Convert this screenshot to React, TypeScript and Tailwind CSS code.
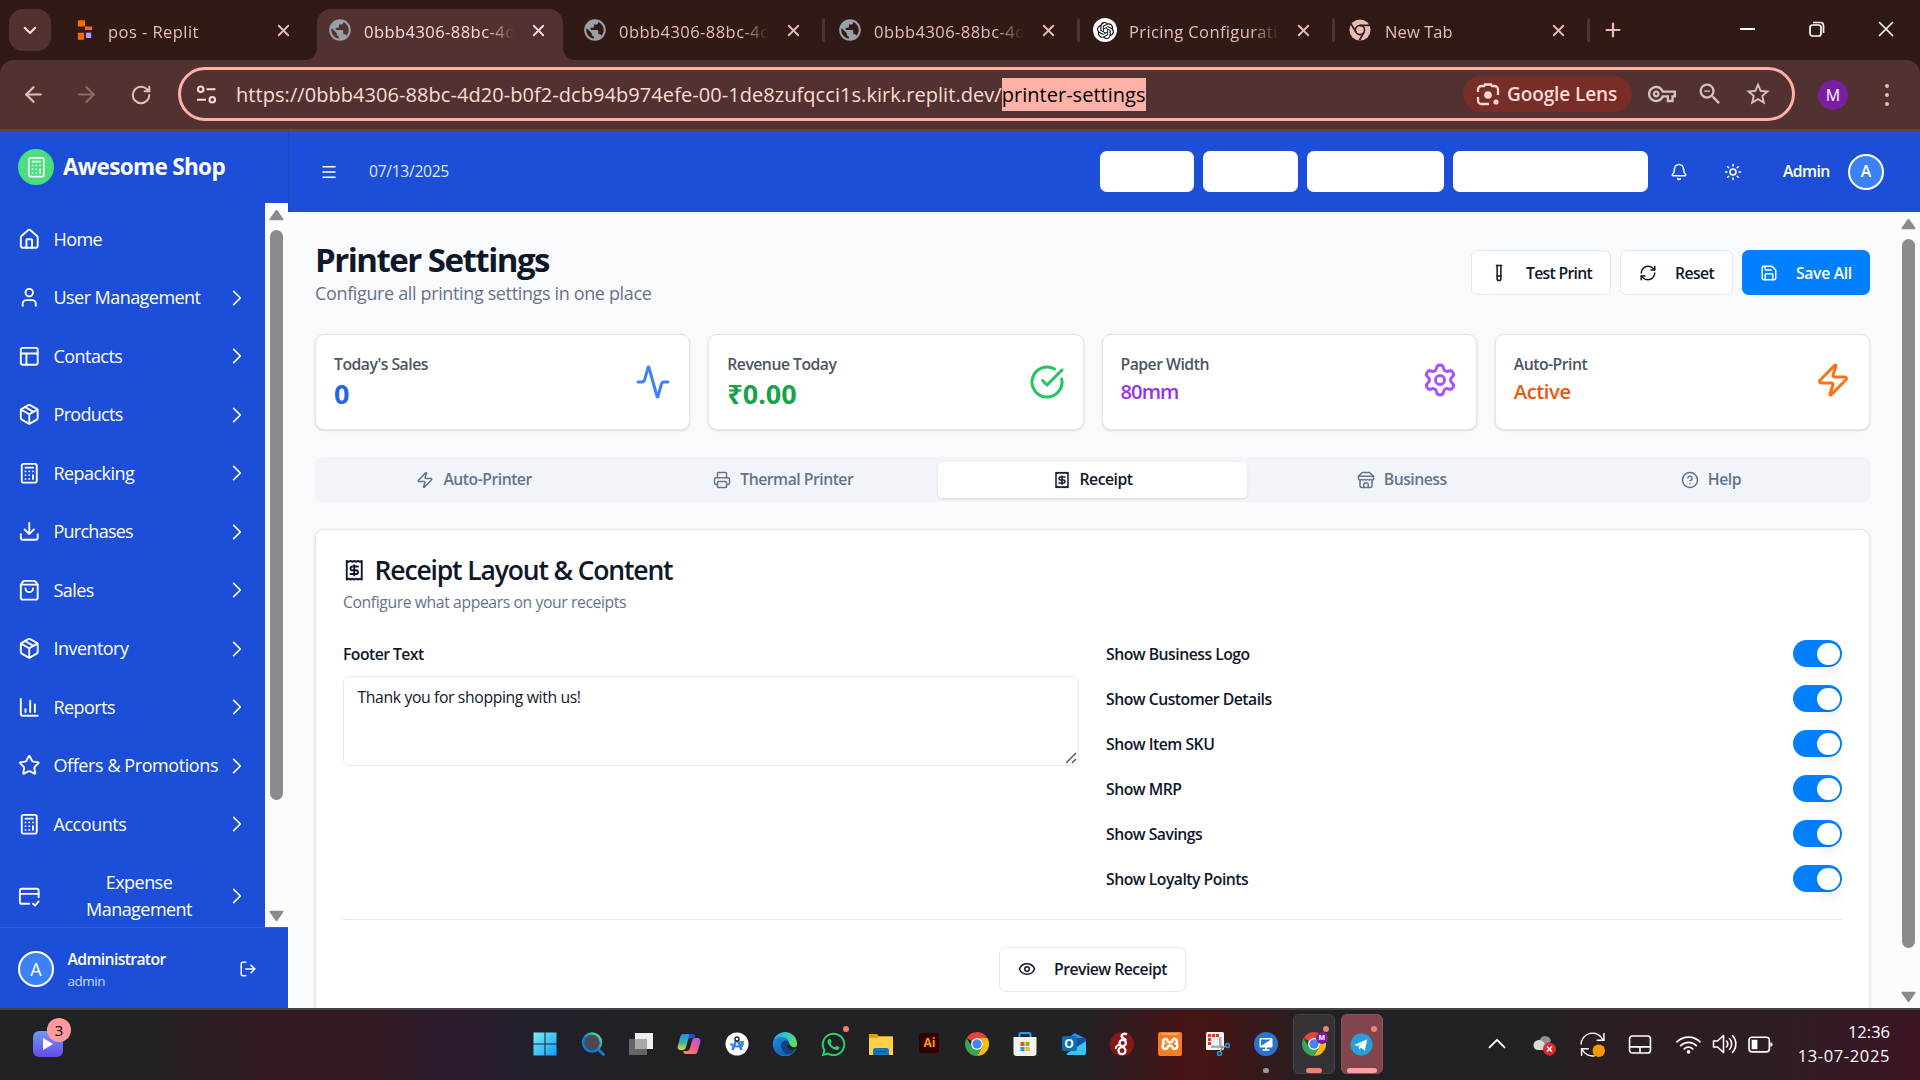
import type { ReactNode } from "react";
import {
  Activity, ArrowLeft, ArrowRight, Bell, Calculator, ChartColumn, CircleCheckBig, CircleHelp, Download, Eye,
  LogOut, Menu, Package, Plus, Printer, RefreshCw, RotateCw, Save, Settings, ShoppingBag, Star, Sun, TestTube, User, X, Zap,
} from "lucide-react";
import { MdOutlineVpnKey, MdPublic, MdStarBorder, MdZoomOut } from "react-icons/md";
import { SiOpenai } from "react-icons/si";
import { FaWhatsapp } from "react-icons/fa";

type IconProps = { className?: string };

function Line({ className = "", children, sw = 2 }: IconProps & { children: ReactNode; sw?: number }) {
  return (
    <svg viewBox="0 0 24 24" className={className} fill="none" stroke="currentColor" strokeWidth={sw} strokeLinecap="round" strokeLinejoin="round">
      {children}
    </svg>
  );
}

const HomeIcon = ({ className }: IconProps) => (
  <Line className={className}>
    <path d="M15 21v-8a1 1 0 0 0-1-1h-4a1 1 0 0 0-1 1v8" />
    <path d="M3 10a2 2 0 0 1 .71-1.53l7-6a2 2 0 0 1 2.58 0l7 6A2 2 0 0 1 21 10v9a2 2 0 0 1-2 2H5a2 2 0 0 1-2-2z" />
  </Line>
);
const UserIcon = ({ className }: IconProps) => <User className={className} />;
const LayoutIcon = ({ className }: IconProps) => (
  <Line className={className}>
    <rect x="3" y="3" width="18" height="18" rx="2" />
    <path d="M3 9h18M9 21V9" />
  </Line>
);
const ReceiptIcon = ({ className }: IconProps) => (
  <Line className={className}>
    <path d="M4 2v20l2-1 2 1 2-1 2 1 2-1 2 1 2-1 2 1V2l-2 1-2-1-2 1-2-1-2 1-2-1-2 1Z" />
    <path d="M16 8h-6a2 2 0 1 0 0 4h4a2 2 0 1 1 0 4H8M12 17.5v-11" />
  </Line>
);
const StoreIcon = ({ className }: IconProps) => (
  <Line className={className}>
    <path d="m2 7 4.41-4.41A2 2 0 0 1 7.83 2h8.34a2 2 0 0 1 1.42.59L22 7" />
    <path d="M4 12v8a2 2 0 0 0 2 2h12a2 2 0 0 0 2-2v-8M15 22v-4a2 2 0 0 0-2-2h-2a2 2 0 0 0-2 2v4M2 7h20" />
    <path d="M22 7v3a2 2 0 0 1-2 2a2.7 2.7 0 0 1-1.59-.63.7.7 0 0 0-.82 0A2.7 2.7 0 0 1 16 12a2.7 2.7 0 0 1-1.59-.63.7.7 0 0 0-.82 0A2.7 2.7 0 0 1 12 12a2.7 2.7 0 0 1-1.59-.63.7.7 0 0 0-.82 0A2.7 2.7 0 0 1 8 12a2.7 2.7 0 0 1-1.59-.63.7.7 0 0 0-.82 0A2.7 2.7 0 0 1 4 12a2 2 0 0 1-2-2V7" />
  </Line>
);
const CardCheckIcon = ({ className }: IconProps) => (
  <Line className={className}>
    <path d="M12 20H4a2 2 0 0 1-2-2V6a2 2 0 0 1 2-2h16a2 2 0 0 1 2 2v7" />
    <path d="M2 9.5h20M16 20l2.2 2L22 17.5" />
  </Line>
);
const ChevronIcon = ({ className }: IconProps) => (
  <Line className={className} sw={2}>
    <path d="m8 4 8 8-8 8" />
  </Line>
);

/* ---------- Browser chrome ---------- */

const ChromeMono = () => (
  <svg viewBox="0 0 24 24" className="size-[22px]">
    <circle cx="12" cy="12" r="11.5" fill="#e7bdb7" />
    <circle cx="12" cy="12" r="5" fill="none" stroke="#311915" strokeWidth="1.8" />
    <path d="M12 7h10.5M7.7 14.5 2.4 5.6M16.3 14.5 11.4 23.2" stroke="#311915" strokeWidth="1.8" />
  </svg>
);

const ReplitIcon = () => (
  <svg viewBox="0 0 18 24" className="h-[22px] w-[16px]">
    <path fill="#ff6a00" d="M1 1h8v7H1zM9 8h8v4H9zM1 15h7v8H1z" />
    <path fill="#ad9dff" d="M10 15h6v6h-6z" />
  </svg>
);

const Globe = () => <MdPublic className="size-[26px] text-[#9aa0a6]" />;

function Tab({ icon, title, active, divider, track }: { icon: ReactNode; title: string; active?: boolean; divider?: boolean; track: string }) {
  return (
    <div className={`relative flex h-[51px] w-[255px] shrink-0 items-start pt-[9px] ${active ? "z-10" : ""}`}>
      {active && (
        <svg viewBox="0 0 270 51" className="absolute top-0 -left-[12px] h-[51px] w-[270px] text-[#513230]">
          <path fill="currentColor" d="M0 51c8 0 12-6 12-14V14C12 6 18 0 26 0h218c8 0 14 6 14 14v23c0 8 4 14 12 14z" />
        </svg>
      )}
      <div className="relative ml-[9px] flex h-[24px] w-[28px] shrink-0 items-center justify-center">{icon}</div>
      <div
        className={`relative ml-[10px] h-[28px] w-[153px] shrink-0 whitespace-nowrap [mask-image:linear-gradient(to_right,black_80%,transparent_98%)] text-[16.5px] leading-[28px] ${track} ${active ? "text-[#ffdad5]" : "text-[#e7bdb7]"}`}
      >
        {title}
      </div>
      <X className={`relative ml-[12px] mt-[3px] size-[19px] shrink-0 ${active ? "text-[#ffdad5]" : "text-[#e7bdb7]"}`} strokeWidth={2.3} />
      {divider && <div className="relative ml-[19px] h-[24px] w-[3px] shrink-0 rounded bg-[#513230]" />}
    </div>
  );
}

function TabStrip() {
  return (
    <div className="flex h-[60px] bg-[#311915] pt-[9px]">
      <div className="ml-[9px] flex h-[42px] w-[42px] items-center justify-center rounded-[14px] bg-[#513230] text-[#ffdad5]">
        <Line className="size-[18px]" sw={2.8}>
          <path d="m5 9 7 7 7-7" />
        </Line>
      </div>
      <div className="ml-[11px] flex">
        <Tab icon={<ReplitIcon />} title="pos - Replit" track="tracking-[0.45px] -indent-px" />
        <Tab icon={<Globe />} title="0bbb4306-88bc-4d" active track="tracking-[0.45px]" />
        <Tab icon={<Globe />} title="0bbb4306-88bc-4d" divider track="tracking-[0.45px]" />
        <Tab icon={<Globe />} title="0bbb4306-88bc-4d" divider track="tracking-[0.45px]" />
        <Tab
          icon={
            <span className="flex size-[24px] items-center justify-center rounded-full bg-white">
              <SiOpenai className="size-[17px] text-black" />
            </span>
          }
          title="Pricing Configurati"
          divider
          track="tracking-[0.38px]"
        />
        <Tab icon={<ChromeMono />} title="New Tab" divider track="tracking-[0.1px] indent-px" />
      </div>
      <Plus className="ml-[10px] mt-[10px] size-[22px] text-[#e7bdb7]" strokeWidth={2.4} />
      <div className="mt-[12px] mr-[26px] ml-auto flex h-[16px] items-center text-white">
        <div className="mt-[-1px] h-[2px] w-[15px] bg-white" />
        <svg viewBox="0 0 16 16" className="ml-[54px] size-[16px]" fill="none" stroke="currentColor" strokeWidth="1.7">
          <rect x="1" y="4" width="11" height="11" rx="2.5" />
          <path d="M4 1.5h7.5a3 3 0 0 1 3 3V12" />
        </svg>
        <svg viewBox="0 0 16 16" className="ml-[53px] size-[16px]" stroke="currentColor" strokeWidth="1.7">
          <path d="m1 1 14 14M15 1 1 15" />
        </svg>
      </div>
    </div>
  );
}

function Toolbar() {
  return (
    <div className="bg-[#311915]">
      <div className="flex h-[71px] items-center rounded-t-[14px] border-b-2 border-[#5f4441] bg-[#513230] text-[#e7bdb7]">
        <ArrowLeft className="ml-[21px] size-[25px]" strokeWidth={2.1} />
        <ArrowRight className="ml-[28px] size-[25px] text-[#8d6b68]" strokeWidth={2.1} />
        <RotateCw className="ml-[31px] size-[22px]" strokeWidth={2.2} />
        <div className="mt-[-1px] ml-[26px] flex h-[54px] w-[1617px] items-center rounded-full border-[3px] border-[#ffb1a7] pl-[15px]">
          <svg viewBox="0 0 20 20" className="size-[21px] text-[#ffdad5]" fill="none" stroke="currentColor" strokeWidth="2">
            <circle cx="4.5" cy="5" r="2.6" />
            <path d="M10 5h8.5M1 15h8.5" />
            <circle cx="15.5" cy="15" r="2.6" />
          </svg>
          <div className="ml-[19px] flex items-center text-[20px] leading-[33px] whitespace-nowrap text-[#ffdad5]">
            <span className="tracking-[0.06px]">https://0bbb4306-88bc-4d20-b0f2-dcb94b974efe-00-1de8zufqcci1s.kirk.replit.dev/</span>
            <span className="bg-[#ffb1a7] tracking-[0.02px] text-black">printer-settings</span>
          </div>
          <div className="mr-[20px] ml-auto flex items-center">
            <div className="flex h-[36px] w-[169px] items-center rounded-full bg-[#772e29] pl-[13px] text-[#ffdad5]">
              <svg viewBox="0 0 24 24" className="size-[24px]" fill="none" stroke="currentColor" strokeWidth="2.3">
                <path d="M2 10V7.5A3.5 3.5 0 0 1 5.5 4H8l1-1.5h6L16 4h2.5A3.5 3.5 0 0 1 22 7.5V13M2 15v3.5A3.5 3.5 0 0 0 5.5 22H13" />
                <circle cx="12" cy="13" r="3.8" fill="currentColor" stroke="none" />
                <circle cx="20" cy="20" r="2.6" fill="currentColor" stroke="none" />
              </svg>
              <span className="mt-px ml-[7px] text-[19px] font-[550] tracking-[-0.1px] whitespace-nowrap">Google Lens</span>
            </div>
            <MdOutlineVpnKey className="ml-[16px] size-[28px] text-[#d8c2be]" />
            <MdZoomOut className="ml-[20px] size-[28px] text-[#d8c2be]" />
            <MdStarBorder className="ml-[20px] size-[28px] text-[#d8c2be]" />
          </div>
        </div>
        <div className="ml-[23px] flex size-[30px] items-center justify-center rounded-full bg-[#7b1fa2] text-[16px] text-white">M</div>
        <div className="ml-[37px] flex flex-col gap-[5px]">
          <i className="size-[4px] rounded-full bg-[#e7bdb7]" />
          <i className="size-[4px] rounded-full bg-[#e7bdb7]" />
          <i className="size-[4px] rounded-full bg-[#e7bdb7]" />
        </div>
      </div>
    </div>
  );
}

/* ---------- Application ---------- */

function Scrollbar({ thumb }: { thumb: string }) {
  return (
    <div className="flex w-[23px] shrink-0 flex-col items-center bg-[#fcfcfc] text-[#8b8b8b]">
      <svg viewBox="0 0 16 12" className="mt-[6px] h-[12px] w-[15px] shrink-0">
        <path d="M8 1.5 14.5 10.5h-13z" fill="currentColor" stroke="currentColor" strokeWidth="2" strokeLinejoin="round" />
      </svg>
      <div className={`mt-[9px] w-[13px] shrink-0 rounded-full bg-[#8b8b8b] ${thumb}`} />
      <svg viewBox="0 0 16 12" className="mt-auto mb-[5px] h-[12px] w-[15px] shrink-0">
        <path d="M8 10.5 1.5 1.5h13z" fill="currentColor" stroke="currentColor" strokeWidth="2" strokeLinejoin="round" />
      </svg>
    </div>
  );
}

const nav: { label: string; icon: (p: IconProps) => ReactNode; leaf?: boolean; tall?: boolean; track?: string }[] = [
  { label: "Home", icon: HomeIcon, leaf: true },
  { label: "User Management", icon: UserIcon },
  { label: "Contacts", icon: LayoutIcon },
  { label: "Products", icon: ({ className }) => <Package className={className} />, track: "tracking-[-0.7px]" },
  { label: "Repacking", icon: ({ className }) => <Calculator className={className} /> },
  { label: "Purchases", icon: ({ className }) => <Download className={className} />, track: "tracking-[-0.75px]" },
  { label: "Sales", icon: ({ className }) => <ShoppingBag className={className} /> },
  { label: "Inventory", icon: ({ className }) => <Package className={className} /> },
  { label: "Reports", icon: ({ className }) => <ChartColumn className={className} /> },
  { label: "Offers & Promotions", icon: ({ className }) => <Star className={className} />, track: "tracking-[-0.42px]" },
  { label: "Accounts", icon: ({ className }) => <Calculator className={className} />, track: "tracking-[-0.45px]" },
  { label: "Expense Management", icon: CardCheckIcon, tall: true },
];

function Sidebar() {
  return (
    <aside className="flex h-full w-[288px] shrink-0 flex-col bg-[#1d4ed8] text-white">
      <div className="flex h-[72px] shrink-0 items-center pl-[18px]">
        <div className="flex size-[36px] items-center justify-center rounded-full bg-[#4ade80]">
          <Calculator className="size-[22.5px]" strokeWidth={1.8} />
        </div>
        <span className="ml-[9px] text-[22.5px] font-bold tracking-[-0.65px]">Awesome Shop</span>
      </div>
      <div className="flex min-h-0 flex-1">
        <nav className="flex min-w-0 flex-1 flex-col overflow-hidden pt-[6.75px]">
          {nav.map(({ label, icon: Icon, leaf, tall, track = "tracking-[-0.55px]" }) => (
            <div key={label} className={`flex shrink-0 items-center pr-[17px] pl-[18px] ${tall ? "h-[85.5px]" : "h-[58.5px]"}`}>
              <Icon className="size-[22.5px] shrink-0" />
              <span className={`ml-[13px] text-[18px] leading-[27px] ${track} ${tall ? "w-[171px] px-[20px] text-center" : "whitespace-nowrap"}`}>
                {label}
              </span>
              {!leaf && <ChevronIcon className="mr-[1px] ml-auto size-[20px] shrink-0" />}
            </div>
          ))}
        </nav>
        <Scrollbar thumb="h-[570px]" />
      </div>
      <div className="flex h-[81px] shrink-0 items-center border-t border-[#2563eb] pt-[2px] pr-[31px] pl-[18px]">
        <div className="flex size-[36px] items-center justify-center rounded-full border-2 border-white bg-[#3b82f6] text-[18px]">A</div>
        <div className="mt-[1px] ml-[13.5px]">
          <div className="text-[15.75px] leading-[22.5px] font-[650] tracking-[-0.65px]">Administrator</div>
          <div className="text-[13.5px] leading-[20px] tracking-[-0.5px] text-[#bfdbfe]">admin</div>
        </div>
        <LogOut className="ml-auto size-[18px]" />
      </div>
    </aside>
  );
}

function Header() {
  return (
    <header className="flex h-[81px] shrink-0 items-center border-l border-[#1a47c4] bg-[#1d4ed8] pr-[36px] pl-[31px] text-white">
      <Menu className="size-[18px]" />
      <span className="ml-[31px] text-[15.75px] tracking-[-0.36px] text-[#dbeafe]">07/13/2025</span>
      <div className="ml-auto flex gap-[9px]">
        <div className="h-[41px] w-[94px] rounded-[6.75px] bg-white" />
        <div className="h-[41px] w-[95px] rounded-[6.75px] bg-white" />
        <div className="h-[41px] w-[137px] rounded-[6.75px] bg-white" />
        <div className="h-[41px] w-[195px] rounded-[6.75px] bg-white" />
      </div>
      <Bell className="ml-[22px] size-[18px]" />
      <Sun className="ml-[36px] size-[18px]" />
      <span className="ml-[41px] w-[47px] text-[15.75px] font-[650] tracking-[-0.6px]">Admin</span>
      <div className="ml-[18px] flex size-[36px] items-center justify-center rounded-full border-2 border-white bg-[#3b82f6] text-[15.75px] font-semibold">
        A
      </div>
    </header>
  );
}

function StatCard({ label, value, color, big, icon }: { label: string; value: string; color: string; big?: boolean; icon: ReactNode }) {
  return (
    <div className="h-[96px] rounded-[9px] border border-[#e2e8f0] bg-white p-[18px] shadow-sm">
      <div className="flex items-center justify-between">
        <div>
          <div className="text-[15.75px] leading-[22.5px] font-[560] tracking-[-0.5px] text-[#4b5563]">{label}</div>
          <div className={`${big ? "text-[27px] leading-[36px] font-bold" : "text-[20.25px] leading-[31.5px] font-[560]"} ${color}`}>{value}</div>
        </div>
        {icon}
      </div>
    </div>
  );
}

const tabs: { label: string; icon: ReactNode; active?: boolean }[] = [
  { label: "Auto-Printer", icon: <Zap className="size-[18px]" /> },
  { label: "Thermal Printer", icon: <Printer className="size-[18px]" /> },
  { label: "Receipt", icon: <ReceiptIcon className="size-[18px]" />, active: true },
  { label: "Business", icon: <StoreIcon className="size-[18px]" /> },
  { label: "Help", icon: <CircleHelp className="size-[18px]" /> },
];

const toggles = ["Show Business Logo", "Show Customer Details", "Show Item SKU", "Show MRP", "Show Savings", "Show Loyalty Points"];

function Content() {
  return (
    <div className="flex min-h-0 flex-1">
      <main className="flex min-w-0 flex-1 flex-col overflow-hidden bg-[#f9fafb] px-[27px] text-[#0f172a]">
        <div className="mt-[27px] flex h-[67px] shrink-0 items-center justify-between">
          <div className="mt-[2px]">
            <h1 className="text-[33px] leading-[40.5px] font-bold tracking-[-1.5px]">Printer Settings</h1>
            <p className="mt-[-1px] text-[18px] leading-[27px] tracking-[-0.36px] text-[#64748b]">Configure all printing settings in one place</p>
          </div>
          <div className="flex gap-[9px] text-[15.75px] font-semibold">
            <div className="flex h-[45px] w-[140px] items-center rounded-[6.75px] border border-[#e2e8f0] bg-white pl-[18px]">
              <TestTube className="size-[18px]" />
              <span className="mt-[2px] ml-[18px] tracking-[-0.7px] whitespace-nowrap">Test Print</span>
            </div>
            <div className="flex h-[45px] w-[113px] items-center rounded-[6.75px] border border-[#e2e8f0] bg-white pl-[18px]">
              <RefreshCw className="size-[18px]" />
              <span className="mt-[2px] ml-[18px] tracking-[-0.6px]">Reset</span>
            </div>
            <div className="flex h-[45px] w-[128px] items-center rounded-[6.75px] bg-[#0080ff] pl-[18px] text-white">
              <Save className="size-[18px]" />
              <span className="mt-[2px] ml-[18px] tracking-[-0.35px]">Save All</span>
            </div>
          </div>
        </div>

        <div className="mt-[28px] grid shrink-0 grid-cols-4 gap-[18px]">
          <StatCard label="Today's Sales" value="0" color="text-[#2563eb]" big icon={<Activity className="size-[36px] text-[#3b82f6]" />} />
          <StatCard label="Revenue Today" value="₹0.00" color="text-[#16a34a]" big icon={<CircleCheckBig className="size-[36px] text-[#22c55e]" />} />
          <StatCard label="Paper Width" value="80mm" color="text-[#9333ea] tracking-[-1px]" icon={<Settings className="size-[36px] text-[#a855f7]" />} />
          <StatCard label="Auto-Print" value="Active" color="text-[#ea580c] tracking-[-0.45px]" icon={<Zap className="size-[36px] text-[#f97316]" />} />
        </div>

        <div className="mt-[27px] flex h-[45px] shrink-0 rounded-[6.75px] bg-[#f1f5f9] p-[4.5px] text-[15.75px] font-[560] tracking-[-0.5px] text-[#64748b]">
          {tabs.map((t) => (
            <div
              key={t.label}
              className={`flex flex-1 items-center justify-center gap-[9px] rounded-[4.5px] ${t.active ? "bg-white text-[#0f172a] shadow-sm" : ""}`}
            >
              {t.icon}
              <span className="pt-px">{t.label}</span>
            </div>
          ))}
        </div>

        <section className="mt-[27px] h-[520px] shrink-0 rounded-[9px] border border-[#e2e8f0] bg-white px-[27px] pt-[27px] shadow-sm">
          <h2 className="flex h-[27px] items-center gap-[9px] text-[26.5px] leading-[27px] font-[550] tracking-[-1.15px]">
            <ReceiptIcon className="size-[22.5px]" />
            Receipt Layout &amp; Content
          </h2>
          <p className="mt-[6.75px] text-[15.75px] leading-[22.5px] tracking-[-0.41px] text-[#64748b]">Configure what appears on your receipts</p>
          <div className="mt-[27px] grid grid-cols-2 gap-[27px]">
            <div>
              <div className="h-[27px] pt-px text-[15.75px] leading-[27px] font-[560] tracking-[-0.55px]">Footer Text</div>
              <div className="relative mt-[8.5px] h-[90px] rounded-[6.75px] border border-[#e2e8f0] px-[13.5px] py-[9px] text-[15.75px] leading-[22.5px] tracking-[-0.37px]">
                Thank you for shopping with us!
                <svg viewBox="0 0 12 12" className="absolute right-[1px] bottom-[1px] size-[12px]" stroke="#4b4b4b" strokeWidth="1.3">
                  <path d="M1 11 11 1M7 11l4-4" />
                </svg>
              </div>
            </div>
            <div className="flex flex-col gap-[18px]">
              {toggles.map((label) => (
                <div key={label} className="flex h-[27px] items-center justify-between">
                  <span className="pt-[2px] text-[15.75px] font-[560] tracking-[-0.5px]">{label}</span>
                  <span className="flex h-[27px] w-[49.5px] items-center justify-end rounded-full bg-[#0080ff] pr-[2.25px]">
                    <span className="size-[22.5px] rounded-full bg-white shadow-lg" />
                  </span>
                </div>
              ))}
            </div>
          </div>
          <div className="mt-[26.5px] flex justify-center border-t border-[#e2e8f0] pt-[27px]">
            <div className="flex h-[45px] w-[187px] items-center rounded-[6.75px] border border-[#e2e8f0] pl-[18px] text-[15.75px] font-[560]">
              <Eye className="size-[18px]" />
              <span className="mt-[2px] ml-[18px] tracking-[-0.52px] whitespace-nowrap">Preview Receipt</span>
            </div>
          </div>
        </section>
      </main>
      <Scrollbar thumb="h-[709px]" />
    </div>
  );
}

/* ---------- Taskbar ---------- */

const ChromeColor = () => (
  <svg viewBox="0 0 24 24" className="size-[24px]">
    <path fill="#ea4335" d="M12 0a12 12 0 0 1 10.4 6H12a6 6 0 0 0-5.2 3L1.61 6A12 12 0 0 1 12 0z" />
    <path fill="#fbbc05" d="M22.4 6A12 12 0 0 1 12 24l5.2-9A6 6 0 0 0 17.2 9 6 6 0 0 0 12 6z" />
    <path fill="#34a853" d="M1.61 6 6.8 15a6 6 0 0 0 8 2.3L17.2 15 12 24A12 12 0 0 1 1.61 6z" />
    <circle cx="12" cy="12" r="6" fill="#fff" />
    <circle cx="12" cy="12" r="4.7" fill="#4285f4" />
  </svg>
);

const taskIcons: ReactNode[] = [
  <svg key="start" viewBox="0 0 24 24" className="size-[24px]">
    <defs>
      <linearGradient id="win" gradientUnits="userSpaceOnUse" x1="0" y1="0" x2="24" y2="24"><stop stopColor="#7ff0fb" /><stop offset="1" stopColor="#0a9bf5" /></linearGradient>
    </defs>
    <path fill="url(#win)" d="M.5.5h11v11H.5zM12.5.5h11v11h-11zM.5 12.5h11v11H.5zM12.5 12.5h11v11h-11z" />
  </svg>,
  <svg key="search" viewBox="0 0 24 24" className="size-[24px]" fill="none">
    <defs>
      <linearGradient id="mag" x1="0" y1="1" x2="1" y2="0"><stop offset=".4" stopColor="#0a7bd6" /><stop offset="1" stopColor="#6fe08a" /></linearGradient>
    </defs>
    <circle cx="11" cy="10.5" r="9" fill="#4a4a50" stroke="url(#mag)" strokeWidth="2.6" />
    <path d="m17.5 17.5 5 5" stroke="#0f7fdb" strokeWidth="2.8" strokeLinecap="round" />
  </svg>,
  <svg key="view" viewBox="0 0 24 24" className="size-[24px]">
    <path fill="#efefef" d="M6 1h18v16H6z" />
    <path fill="#6d6d6d" fillOpacity=".9" d="M0 7h18v16H0z" />
    <path fill="#a9a9a9" d="M6 7h12v10H6z" />
  </svg>,
  <svg key="copilot" viewBox="0 0 24 24" className="size-[24px]">
    <defs>
      <linearGradient id="cpa" x1="0" y1="0" x2="0" y2="1"><stop stopColor="#1c8df0" /><stop offset=".55" stopColor="#3bb9a0" /><stop offset="1" stopColor="#f1d32b" /></linearGradient>
      <linearGradient id="cpb" x1="1" y1="0" x2="0" y2="1"><stop stopColor="#a45cf0" /><stop offset=".5" stopColor="#ee5b8f" /><stop offset="1" stopColor="#fb9a4b" /></linearGradient>
    </defs>
    <path fill="url(#cpa)" d="M6 2h9c2 0 2.5 1.5 3 3h-4c-2 0-2.5 1-3 3l-2 7c-.5 2-1.5 3-3.5 3H4c-3 0-4-2-3-5l2-7c.7-2.500 1-4 3-4z" />
    <path fill="#1a4fd0" d="M12 2h3c2 0 2.5 1.5 3.2 4h-4c-1.5 0-2 .5-2.7 2z" />
    <path fill="url(#cpb)" d="M18 22H9c-2 0-2.5-1.5-3-3h4c2 0 2.5-1 3-3l2-7c.5-2 1.5-3 3.5-3H20c3 0 4 2 3 5l-2 7c-.7 2.5-1 4-3 4z" />
  </svg>,
  <svg key="studio" viewBox="0 0 24 24" className="size-[24px]">
    <circle cx="12" cy="12" r="11.5" fill="#fff" />
    <path fill="#34a853" d="M15 9h4l-1 6h-2z" />
    <path d="m12 6-4.5 12M12 6l4.5 12" stroke="#3f7df0" strokeWidth="2.6" />
    <path d="M5.5 11.5c3 4 10 4 13 0" fill="none" stroke="#3f7df0" strokeWidth="2" />
    <circle cx="12" cy="7" r="2" fill="#fff" stroke="#223" strokeWidth="1.4" />
  </svg>,
  <svg key="edge" viewBox="0 0 24 24" className="size-[24px]">
    <defs>
      <linearGradient id="eg" x1="0" y1="0" x2="1" y2=".4"><stop stopColor="#1f9fe6" /><stop offset=".5" stopColor="#35c6cf" /><stop offset="1" stopColor="#62e24c" /></linearGradient>
      <linearGradient id="eb" x1="0" y1="0" x2="1" y2="1"><stop stopColor="#1b8fe0" /><stop offset="1" stopColor="#0c4fa5" /></linearGradient>
    </defs>
    <circle cx="12" cy="12" r="12" fill="url(#eg)" />
    <path fill="url(#eb)" d="M0 12c0-5 5-7 8.5-7C13 5 16 8 16 11c0 2-2 2-2 4 0 1.5 2 3 5 3 1.5 0 2.5-.5 3.5-1C20.5 21 17 24 12 24 5 24 0 18.5 0 12z" />
    <path fill="#0b4287" d="M8 14c0-3 2-5.5 4.5-5.5C15 8.5 16 10 16 11c0 2-2 2-2 4 0 1.5 2 3 5 3 1.5 0 2.5-.5 3.5-1-1.5 3-4.5 5-7 5-4 0-7.5-4-7.5-8z" />
    <path fill="#222126" d="M16 11c0 2-2 2-2 4 0 1.5 2 3 5 3 2 0 3-.5 5-2v-2c-2 2-6 2-8-3z" />
  </svg>,
  <span key="wa" className="relative">
    <FaWhatsapp className="size-[27px] text-[#25d366]" />
    <i className="absolute -top-[5px] -right-[2px] size-[6px] rounded-full bg-[#f4806a]" />
  </span>,
  <svg key="files" viewBox="0 0 24 24" className="size-[24px]">
    <path fill="#e59e00" d="M0 2h8l2 2.5h14V8H0z" />
    <path fill="#ffcf48" d="M0 6h8l2-1.5h14V23H0z" />
    <path fill="#0d74c8" d="M4 23v-4.5A2.5 2.5 0 0 1 6.5 16h11a2.5 2.5 0 0 1 2.5 2.5V23z" />
    <path stroke="#064a85" d="M7 19.5h10" />
  </svg>,
  <span key="ai" className="mt-[-3px] flex size-[20px] items-center justify-center rounded-[3px] bg-[#330000] text-[12px] font-bold text-[#ff9a00]">Ai</span>,
  <ChromeColor key="chrome" />,
  <svg key="store" viewBox="0 0 24 24" className="size-[24px]">
    <path d="M6.5 6V2.5A1.5 1.5 0 0 1 8 1h8a1.5 1.5 0 0 1 1.5 1.5V6" fill="none" stroke="#1aa5f0" strokeWidth="2" />
    <path fill="#f2f2f2" d="M.5 5h23v16a3 3 0 0 1-3 3h-17a3 3 0 0 1-3-3z" />
    <path fill="#f25022" d="M7.5 10H11.5v4h-4z" />
    <path fill="#7fba00" d="M12.5 10h4v4h-4z" />
    <path fill="#00a4ef" d="M7.5 15h4v4h-4z" />
    <path fill="#ffb900" d="M12.5 15h4v4h-4z" />
  </svg>,
  <span key="outlook" className="relative flex size-[24px]">
    <svg viewBox="0 0 24 24" className="size-[24px]">
      <path fill="#2a8fe0" d="M4 7 13 1l11 6v10H4z" />
      <path fill="#0f4fa0" d="M13 6h11v7l-9 3z" />
      <path fill="#38c3f2" d="M4 22 24 9v12a2 2 0 0 1-2 2H6z" />
    </svg>
    <b className="absolute top-[4px] left-0 flex size-[15px] items-center justify-center rounded-[2px] bg-[#0f6cbd] text-[12px] text-white">O</b>
  </span>,
  <svg key="wireguard" viewBox="0 0 24 24" className="size-[24px]">
    <circle cx="12" cy="12" r="12" fill="#88171a" />
    <path d="M17 2.2c-3-1-5.5 0-5.5 2s4 2 4.5 4.3" fill="none" stroke="#fff" strokeWidth="2.4" />
    <circle cx="12.7" cy="11" r="3.2" fill="none" stroke="#fff" strokeWidth="2.2" />
    <circle cx="12" cy="18.7" r="3.5" fill="none" stroke="#fff" strokeWidth="2.2" />
    <path d="M5.5 17c.5-2.5 2-4 4.5-4.5" fill="none" stroke="#fff" strokeWidth="1.8" />
  </svg>,
  <svg key="xampp" viewBox="0 0 24 24" className="size-[24px]">
    <rect width="24" height="24" rx="2" fill="#f57c20" />
    <path fill="#fba866" d="M3 1h18l-1.5 2h-15z" />
    <path d="M9 7.5a2.5 2.5 0 1 0-3 4 2.5 2.5 0 1 0 3 5c1-1 0-3 3-3s2 2 3 3a2.5 2.5 0 1 0 3-5 2.5 2.5 0 1 0-3-4c-1 1 0 3-3 3s-2-2-3-3z" fill="none" stroke="#fff" strokeWidth="2.5" />
  </svg>,
  <svg key="snip" viewBox="0 0 24 24" className="size-[24px]">
    <rect width="18" height="18" rx="1.5" fill="#f3f3f3" />
    <path d="M3.5 13V3.5H14" fill="none" stroke="#d83b01" strokeWidth="3" strokeDasharray="3 1" />
    <path fill="#a8b0b8" d="M13 5h2.5v11H13zM5 13.5h12V16H5z" />
    <circle cx="21.5" cy="13.5" r="2" fill="none" stroke="#1a9be8" strokeWidth="1.6" />
    <circle cx="13.5" cy="21.5" r="2" fill="none" stroke="#1a9be8" strokeWidth="1.6" />
    <path d="m14 14 2 2 4-2M16 16l-2 4" stroke="#8a97a3" strokeWidth="1.5" fill="none" />
  </svg>,
  <span key="remote" className="relative">
    <svg viewBox="0 0 24 24" className="size-[24px]">
      <circle cx="12" cy="12" r="12" fill="#2a74d0" />
      <rect x="5.5" y="6" width="13" height="9.5" rx="1" fill="#fff" />
      <path fill="#2a74d0" d="M7 7.5h10L7 14z" />
      <path d="M12 15v3M8.5 18h7" stroke="#fff" strokeWidth="1.5" />
    </svg>
    <i className="absolute top-[36px] left-[9px] h-[5px] w-[6px] rounded-full bg-[#9a9a9c]" />
  </span>,
  <span key="chrome-m" className="relative flex h-[60px] w-[42px] shrink-0 items-center justify-center rounded-[6px] border border-[#454448] bg-[#343236]">
    <ChromeColor />
    <i className="absolute top-[11px] right-[5px] size-[6px] rounded-full bg-[#f4806a]" />
    <b className="absolute top-[17px] right-[6px] flex size-[12px] items-center justify-center rounded-full bg-[#7b1fa2] text-[7px] text-white">M</b>
    <i className="absolute bottom-0 h-[5px] w-[16px] rounded-full bg-[#f4806a]" />
  </span>,
  <span key="telegram" className="relative flex h-[60px] w-[42px] shrink-0 items-center justify-center rounded-[6px] border border-[#8d525a] bg-[#82454d]">
    <svg viewBox="0 0 24 24" className="size-[23px]">
      <circle cx="12" cy="12" r="11.5" fill="#279fd8" />
      <path fill="#fff" d="m4.5 12.5 13.5-6-2.5 12-4-3-2 2-.5-4 5-4-6.5 4z" />
    </svg>
    <i className="absolute top-[11px] right-[5px] size-[6px] rounded-full bg-[#f4806a]" />
    <i className="absolute bottom-0 h-[5px] w-[30px] rounded-full bg-[#ff9ea6]" />
  </span>,
];

function Taskbar() {
  return (
    <footer className="flex h-[72px] items-center border-t-2 border-[#454146] bg-[linear-gradient(90deg,#202223_0px,#202223_130px,#331a22_270px,#331a22_350px,#2c1a2c_450px,#221f2a_520px,#212025_640px,#212126_1080px,#451415_1180px,#451415_1210px,#212126_1330px,#202223_1500px,#2a1e22_1600px,#301c24_1800px,#3d1426_1920px)] pb-[2px] text-white">
      <div className="relative ml-[33px] flex h-[26px] w-[30px] items-center justify-center rounded-[6px] bg-gradient-to-b from-[#6f97f4] to-[#6448e8]">
        <svg viewBox="0 0 10 12" className="h-[12px] w-[10px]"><path fill="#fff" d="m0 0 10 6-10 6z" /></svg>
        <span className="absolute -top-[13px] -right-[8px] flex size-[24px] items-center justify-center rounded-full bg-[#ff9a9f] text-[15px] text-black">3</span>
      </div>
      <div className="ml-[458px] flex items-center">
        {taskIcons.map((icon, i) => (
          <div key={i} className="flex w-[48.06px] justify-center">{icon}</div>
        ))}
      </div>
      <div className="mr-[30px] ml-auto flex items-center">
        <Line className="size-[20px]" sw={2.2}><path d="m3 16 9-9 9 9" /></Line>
        <svg viewBox="0 0 24 24" className="ml-[25px] size-[24px]">
          <path fill="#8f8f92" d="M8 7a6 6 0 0 1 11 2l-4 4H6z" />
          <path fill="#d9d9dc" d="M5 18a5 5 0 0 1 0-9.5c3-1 5 0 7 2l3 7.5z" />
          <circle cx="17.5" cy="17" r="6.5" fill="#dc2a35" />
          <path d="m15 14.5 5 5M20 14.5l-5 5" stroke="#fff" strokeWidth="1.6" />
        </svg>
        <svg viewBox="0 0 24 24" className="ml-[24px] size-[25px]" fill="none" stroke="#fff" strokeWidth="1.4">
          <path d="M1 12A11 11 0 0 1 22 7.5M23 1v7h-7M1.5 23v-7h7M2 16.5A11 11 0 0 0 14 22.8" />
          <circle cx="18" cy="18" r="6" fill="#ff9800" stroke="none" />
        </svg>
        <svg viewBox="0 0 24 20" className="ml-[23px] h-[19px] w-[24px]" fill="none" stroke="#fff" strokeWidth="1.7">
          <rect x="1" y="1" width="22" height="18" rx="3" />
          <path d="M1 12.5h22M12 12.5V19" />
        </svg>
        <svg viewBox="0 0 24 18" className="ml-[24px] h-[19px] w-[25px]" fill="none" stroke="#fff" strokeWidth="1.7" strokeLinecap="round">
          <path d="M1 6.5a15.5 15.5 0 0 1 22 0M4.5 10a10.6 10.6 0 0 1 15 0M8 13.2a5.8 5.8 0 0 1 8 0" />
          <circle cx="12" cy="16" r="1.8" fill="#fff" stroke="none" />
        </svg>
        <svg viewBox="0 0 24 20" className="ml-[11px] h-[20px] w-[25px]" fill="none" stroke="#fff" strokeWidth="1.6" strokeLinejoin="round" strokeLinecap="round">
          <path d="M1 7h4l6-5.5v17L5 13H1zM14 7a4.5 4.5 0 0 1 0 6M17 4.5a8 8 0 0 1 0 11M20 1.5a12.5 12.5 0 0 1 0 17" />
        </svg>
        <svg viewBox="0 0 24 16" className="ml-[11px] h-[17px] w-[25px]" fill="none" stroke="#fff" strokeWidth="1.6">
          <rect x="1" y="1" width="19.5" height="14" rx="3" />
          <path fill="#fff" stroke="none" d="M3.5 3.5h5.5v9H3.5zM21.5 5.5l2 1.5v2l-2 1.5z" />
        </svg>
        <div className="ml-[22px] w-[95px] text-right text-[16.5px] leading-[24px] whitespace-nowrap">
          <div>12:36</div>
          <div className="tracking-[0.62px]">13-07-2025</div>
        </div>
      </div>
    </footer>
  );
}

export default function App() {
  return (
    <div className="flex h-[1080px] w-[1920px] flex-col overflow-hidden bg-[#f9fafb] font-['Open_Sans','Noto_Sans',sans-serif]">
      <TabStrip />
      <Toolbar />
      <div className="flex min-h-0 flex-1">
        <Sidebar />
        <div className="flex min-w-0 flex-1 flex-col">
          <Header />
          <Content />
        </div>
      </div>
      <Taskbar />
    </div>
  );
}
